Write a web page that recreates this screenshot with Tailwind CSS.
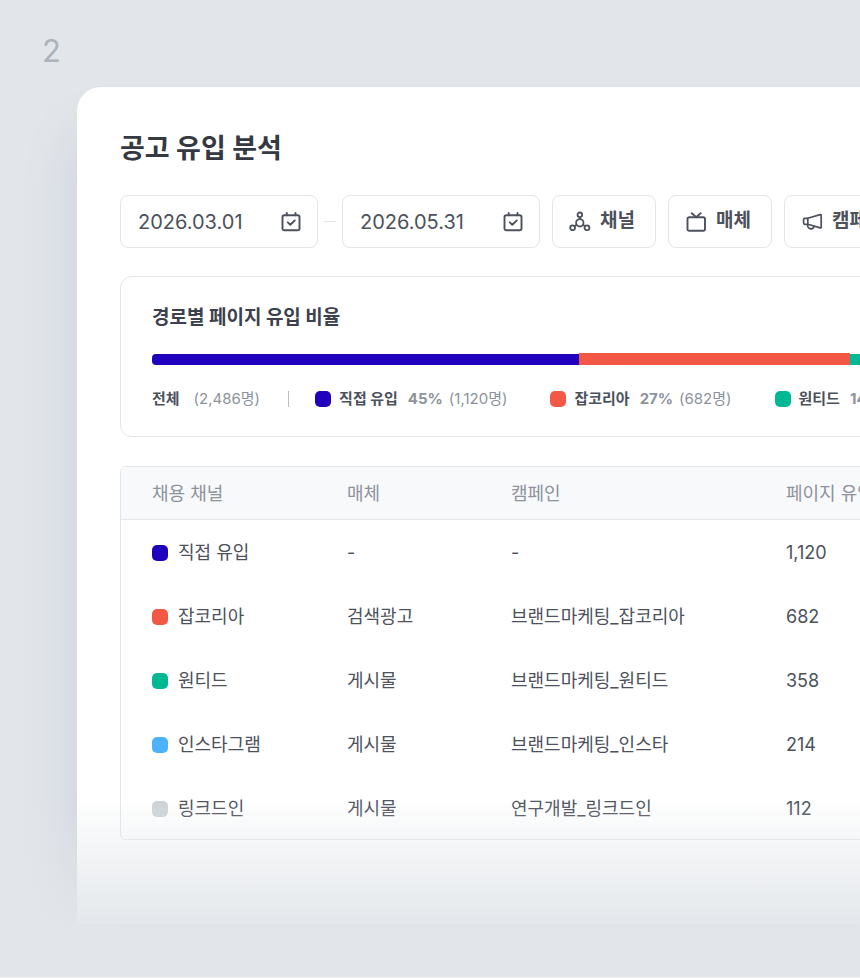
<!DOCTYPE html>
<html lang="ko">
<head>
    <meta charset="UTF-8">
    <meta name="viewport" content="width=device-width, initial-scale=1.0">
    <title>공고 유입 분석</title>
    <script src="https://cdn.jsdelivr.net/npm/@tailwindcss/browser@4"></script>
</head>
<body class="bg-[#e2e6ea] font-['Inter','Noto_Sans_CJK_KR',sans-serif] text-[#4c515c]">
    <div class="relative min-h-screen overflow-hidden pl-[77px] border-b border-[#f1f3f5]">
        <div class="h-[87px] pt-[31px] -ml-[35px] text-[31px] leading-10 text-[#adb2bb]">2</div>

        <main class="min-w-[1100px] rounded-tl-3xl bg-white pl-[43px] pr-11 pt-[42px] pb-[84px] shadow-[0_48px_56px_-4px_rgba(90,100,160,0.22)]">
            <h1 class="text-[27px] leading-10 font-bold text-[#343942]">공고 유입 분석</h1>

            <div class="mt-[26px] flex items-center">
                <label class="flex h-[53px] w-[198px] items-center rounded-lg border border-[#e3e5e8] pl-[17px] pr-4">
                    <input type="text" aria-label="시작일" value="2026.03.01" class="min-w-0 flex-1 text-xl outline-none">
                    <svg class="size-5" viewBox="0 0 20 20" fill="none" stroke="currentColor" stroke-width="1.9" stroke-linecap="round" stroke-linejoin="round">
                        <rect x="1.500" y="3.300" width="17" height="15" rx="1.800"></rect>
                        <path d="M5.800 1v2.300M14.500 1v2.300M6.800 10.300l2.500 2.500 4.500-4.400"></path>
                    </svg>
                </label>
                <span class="mx-1.5 h-px w-3 bg-[#e4e6e9]"></span>
                <label class="flex h-[53px] w-[198px] items-center rounded-lg border border-[#e3e5e8] pl-[17px] pr-4">
                    <input type="text" aria-label="종료일" value="2026.05.31" class="min-w-0 flex-1 text-xl outline-none">
                    <svg class="size-5" viewBox="0 0 20 20" fill="none" stroke="currentColor" stroke-width="1.9" stroke-linecap="round" stroke-linejoin="round">
                        <rect x="1.500" y="3.300" width="17" height="15" rx="1.800"></rect>
                        <path d="M5.800 1v2.300M14.500 1v2.300M6.800 10.300l2.500 2.500 4.500-4.400"></path>
                    </svg>
                </label>
                <div class="ml-3 flex gap-3 text-[19px] font-bold">
                    <button type="button" class="flex h-[53px] items-center gap-2 rounded-lg border border-[#e3e5e8] pl-[15px] pr-5">
                        <svg class="size-6" viewBox="0 0 24 24" fill="none" stroke="currentColor" stroke-width="1.8">
                            <circle cx="11.800" cy="4.800" r="2.300"></circle>
                            <circle cx="11.800" cy="12.800" r="3.700"></circle>
                            <circle cx="4.600" cy="17.800" r="2.400"></circle>
                            <circle cx="19" cy="17.800" r="2.400"></circle>
                            <path d="M11.800 7.100v2M8.600 14.800l-2 1.500M15 14.800l2 1.500"></path>
                        </svg>
                        채널
                    </button>
                    <button type="button" class="flex h-[53px] items-center gap-2 rounded-lg border border-[#e3e5e8] pl-[15px] pr-5">
                        <svg class="size-6" viewBox="0 0 24 24" fill="none" stroke="currentColor" stroke-width="1.9" stroke-linecap="round" stroke-linejoin="round">
                            <rect x="3.500" y="7.300" width="17.500" height="13.500" rx="1.800"></rect>
                            <path d="M7.800 3.200l4.400 4 4.400-4"></path>
                        </svg>
                        매체
                    </button>
                    <button type="button" class="flex h-[53px] items-center gap-2 rounded-lg border border-[#e3e5e8] pl-[15px] pr-5">
                        <svg class="size-6" viewBox="0 0 24 24" fill="none" stroke="currentColor" stroke-width="1.7" stroke-linecap="round" stroke-linejoin="round">
                            <path d="M7.800 8.300L20.200 4.600Q21.200 4.400 21.200 5.400V17.200Q21.200 18.200 20.200 17.900L7.800 14.300z"></path>
                            <path d="M7.800 8.300H4.800Q3.600 8.300 3.600 9.500v3.600Q3.600 14.300 4.800 14.300h3"></path>
                            <path d="M7.800 14.600a3.200 3.200 0 006.200 1.800"></path>
                        </svg>
                        캠페인
                    </button>
                </div>
            </div>

            <section class="mt-7 rounded-xl border border-[#e3e5e8] px-[31px] pt-[27px] pb-[25px]">
                <h2 class="text-[19px] leading-7 font-bold text-[#3c414b]">경로별 페이지 유입 비율</h2>
                <div class="mt-[21px] flex h-3 items-center">
                    <div class="h-[11px] w-[45%] rounded-l bg-[#2100bd]"></div>
                    <div class="h-3 w-[28.5%] bg-[#f25845]"></div>
                    <div class="h-[11px] flex-1 rounded-r bg-[#00b894]"></div>
                </div>
                <div class="mt-[22px] flex h-6 items-center text-[15px] whitespace-nowrap text-[#8d929c]">
                    <strong class="text-[#4c515c]">전체</strong>
                    <span class="ml-3.5">(2,486명)</span>
                    <span class="ml-7 h-4 w-px bg-[#b9bdc4]"></span>
                    <div class="ml-[26px] flex items-center">
                        <i class="size-4 rounded-[5px] bg-[#2100bd]"></i>
                        <strong class="mr-2.5 ml-2 text-[#4c515c]">직접 유입</strong>
                        <b class="mr-1.5">45%</b>
                        <span>(1,120명)</span>
                    </div>
                    <div class="ml-[43px] flex items-center">
                        <i class="size-4 rounded-[5px] bg-[#f25845]"></i>
                        <strong class="mr-2.5 ml-2 text-[#4c515c]">잡코리아</strong>
                        <b class="mr-1.5">27%</b>
                        <span>(682명)</span>
                    </div>
                    <div class="ml-[43px] flex items-center">
                        <i class="size-4 rounded-[5px] bg-[#00b894]"></i>
                        <strong class="mr-2.5 ml-2 text-[#4c515c]">원티드</strong>
                        <b class="mr-1.5">14%</b>
                        <span>(358명)</span>
                    </div>
                </div>
            </section>

            <div class="mt-[29px] overflow-hidden rounded-md border border-[#e3e5e8]">
                <table class="w-full table-fixed text-left text-lg">
                    <thead class="bg-[#f8f9fb] text-[#8d929c]">
                        <tr class="h-[52px] border-b border-[#e3e5e8]">
                            <th class="w-[226px] pt-0.5 pl-[31px] font-normal">채용 채널</th>
                            <th class="w-[164px] pt-0.5 font-normal">매체</th>
                            <th class="w-[275px] pt-0.5 font-normal">캠페인</th>
                            <th class="pt-0.5 font-normal">페이지 유입</th>
                        </tr>
                    </thead>
                    <tbody>
                        <tr class="h-16">
                            <td class="pt-1 pl-[31px]"><div class="flex items-center gap-2.5"><i class="size-4 rounded-[5px] bg-[#2100bd]"></i>직접 유입</div></td>
                            <td class="pt-1">-</td>
                            <td class="pt-1">-</td>
                            <td class="pt-1">1,120</td>
                        </tr>
                        <tr class="h-16">
                            <td class="pt-1 pl-[31px]"><div class="flex items-center gap-2.5"><i class="size-4 rounded-[5px] bg-[#f25845]"></i>잡코리아</div></td>
                            <td class="pt-1">검색광고</td>
                            <td class="pt-1">브랜드마케팅_잡코리아</td>
                            <td class="pt-1">682</td>
                        </tr>
                        <tr class="h-16">
                            <td class="pt-1 pl-[31px]"><div class="flex items-center gap-2.5"><i class="size-4 rounded-[5px] bg-[#00b894]"></i>원티드</div></td>
                            <td class="pt-1">게시물</td>
                            <td class="pt-1">브랜드마케팅_원티드</td>
                            <td class="pt-1">358</td>
                        </tr>
                        <tr class="h-16">
                            <td class="pt-1 pl-[31px]"><div class="flex items-center gap-2.5"><i class="size-4 rounded-[5px] bg-[#4db2f7]"></i>인스타그램</div></td>
                            <td class="pt-1">게시물</td>
                            <td class="pt-1">브랜드마케팅_인스타</td>
                            <td class="pt-1">214</td>
                        </tr>
                        <tr class="h-16">
                            <td class="pt-1 pl-[31px]"><div class="flex items-center gap-2.5"><i class="size-4 rounded-[5px] bg-[#ced3d8]"></i>링크드인</div></td>
                            <td class="pt-1">게시물</td>
                            <td class="pt-1">연구개발_링크드인</td>
                            <td class="pt-1">112</td>
                        </tr>
                    </tbody>
                </table>
            </div>
        </main>

        <!-- bottom fade -->
        <div class="pointer-events-none absolute inset-x-0 bottom-0 h-[180px] bg-linear-to-b from-[#e2e6ea]/0 to-[#e2e6ea] to-75%"></div>
    </div>
</body>
</html>
